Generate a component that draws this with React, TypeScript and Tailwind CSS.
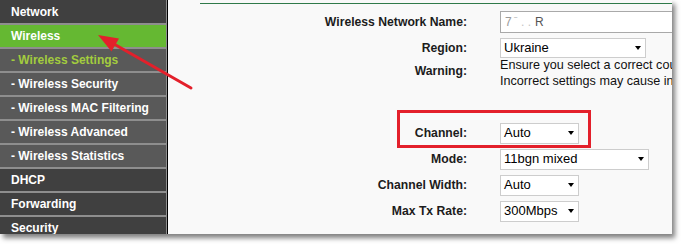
import React from 'react';

// Sidebar menu entries
const menu = [
  { label: 'Network', kind: 'main', first: true },
  { label: 'Wireless', kind: 'active' },
  { label: '- Wireless Settings', kind: 'subActive' },
  { label: '- Wireless Security', kind: 'sub' },
  { label: '- Wireless MAC Filtering', kind: 'sub' },
  { label: '- Wireless Advanced', kind: 'sub' },
  { label: '- Wireless Statistics', kind: 'sub' },
  { label: 'DHCP', kind: 'main' },
  { label: 'Forwarding', kind: 'main' },
  { label: 'Security', kind: 'main' },
];

function MenuItem({ label, kind, first }: { label: string; kind: string; first?: boolean }) {
  let bg = 'bg-[#404040] text-white';
  if (kind === 'active') bg = 'bg-[#65b832] text-white';
  if (kind === 'sub') bg = 'bg-[#595959] text-white';
  if (kind === 'subActive') bg = 'bg-[#595959] text-[#a3cc3e]';
  return (
    <div
      className={`${bg} ${first ? 'h-[23px]' : 'h-[22px]'} shrink-0 flex items-center pl-[11px] text-[12px] font-bold whitespace-nowrap`}
    >
      {label}
    </div>
  );
}

function Select({ value, width, height = 'h-[21px]' }: { value: string; width: string; height?: string }) {
  return (
    <div
      className={`${width} ${height} flex items-center justify-between border border-[#cdcdcd] bg-white pl-[3px] pr-[4px] text-[13px] text-black`}
    >
      <span>{value}</span>
      <span className="w-0 h-0 border-l-[3.5px] border-r-[3.5px] border-t-[4px] border-l-transparent border-r-transparent border-t-black" />
    </div>
  );
}

function Row({ label, children }: { label: string; children: React.ReactNode }) {
  return (
    <div className="flex items-center h-[26px]">
      <div className="w-[299px] shrink-0 text-right text-[12.2px] font-bold text-[#1c1c1c] whitespace-nowrap">{label}</div>
      <div className="ml-[33px] flex items-center shrink-0">{children}</div>
    </div>
  );
}

export default function App() {
  return (
    <div className="w-[681px] h-[244px] bg-white font-['Liberation_Sans',Arial,sans-serif]">
      <div className="relative flex w-[672px] h-[234px] overflow-hidden bg-[#f9f9f9] shadow-[3px_4px_5px_rgba(0,0,0,0.5)]">
        {/* Left menu */}
        <nav className="w-[168px] shrink-0 flex flex-col gap-[2px] bg-[#8e8e8e] pr-px border-r border-black">
          {menu.map((m) => (
            <MenuItem key={m.label} label={m.label} kind={m.kind} first={m.first} />
          ))}
        </nav>

        {/* Settings form */}
        <main className="flex-1 min-w-0 overflow-hidden">
          <div className="mt-[3px] ml-[32px] h-px bg-[#2f7a4a]" />
          <div className="mt-[5px]">
            <Row label="Wireless Network Name:">
              <div className="w-[240px] h-[22px] flex items-center border border-[#a9a9a9] bg-white pl-[4px] text-[12px]">
                <span className="text-[#9a9a9a]">7</span>
                <span className="text-[#c4c4c4] ml-[2px]">ˉ . .</span>
                <span className="text-[#555] ml-[4px]">R</span>
              </div>
            </Row>
            <Row label="Region:">
              <Select value="Ukraine" width="w-[146px]" height="h-[20px]" />
            </Row>
            <div className="flex mt-[-4px]">
              <div className="w-[299px] shrink-0 text-right text-[12.2px] font-bold text-[#1c1c1c] leading-[16px] pt-[6px]">Warning:</div>
              <div className="ml-[33px] shrink-0 text-[12.6px] text-[#111] leading-[16px] whitespace-nowrap">
                <div>Ensure you select a correct country to conform local law.</div>
                <div>Incorrect settings may cause interference.</div>
              </div>
            </div>
            <div className="mt-[31px]">
              <Row label="Channel:">
                <Select value="Auto" width="w-[79px]" />
              </Row>
              <Row label="Mode:">
                <Select value="11bgn mixed" width="w-[149px]" />
              </Row>
              <Row label="Channel Width:">
                <Select value="Auto" width="w-[79px]" />
              </Row>
              <Row label="Max Tx Rate:">
                <Select value="300Mbps" width="w-[79px]" />
              </Row>
            </div>
          </div>
        </main>

        {/* Annotation: red frame around Channel */}
        <div className="absolute left-[397px] top-[110px] w-[194px] h-[38px] border-[3px] border-[#e3202b]" />

        {/* Annotation: red arrow pointing at Wireless */}
        <svg className="absolute left-0 top-0 pointer-events-none" width="672" height="234" viewBox="0 0 672 234">
          <line x1="191" y1="88" x2="114" y2="44" stroke="#e3202b" strokeWidth="3" strokeLinecap="round" />
          <polygon points="98,35 119,38.5 111.5,51.5" fill="#e3202b" />
        </svg>
      </div>
    </div>
  );
}
